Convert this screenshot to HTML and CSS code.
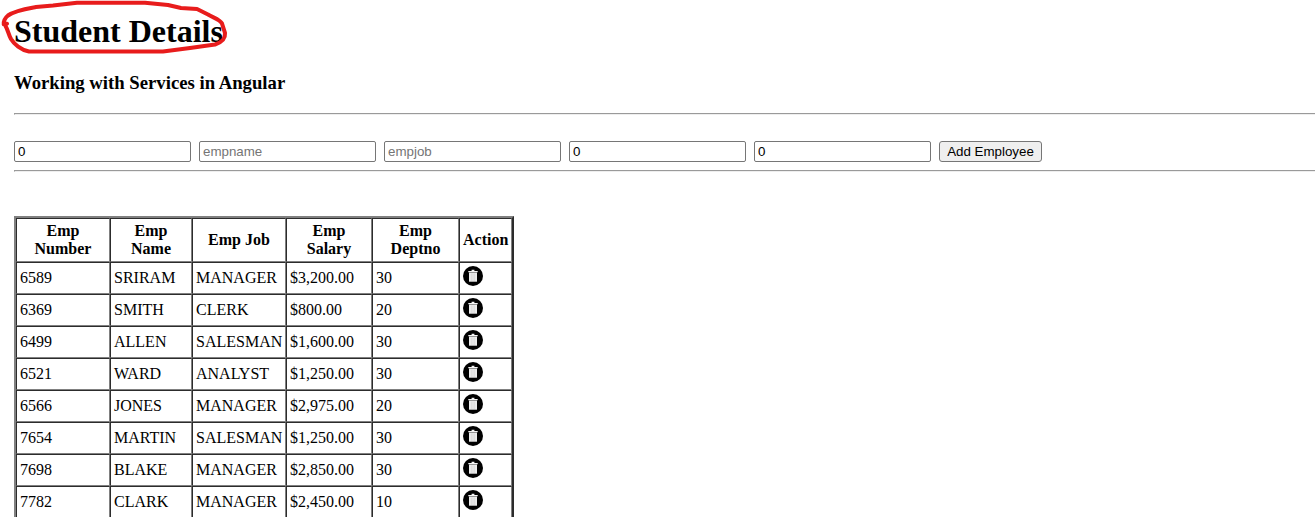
FILE: index.html
```
<!DOCTYPE html>
<html lang="en">
<head>
<meta charset="utf-8">
<title>Student Details</title>
<link rel="stylesheet" href="styles.css">
</head>
<body>
<svg class="sprite" aria-hidden="true">
  <symbol id="trash" viewBox="0 0 20 20">
    <circle cx="10" cy="10" r="10" fill="#000"/>
    <path d="M5.300 5H8.600V3.800H11.400V5H14.700V6.300H5.300Z" fill="#f4f4f4"/>
    <path d="M6 6.500H14V15.700H6Z" fill="#ededed"/>
    <path d="M8.300 7.500V15M10 7.500V15M11.700 7.500V15" stroke="#cfcfcf" stroke-width=".6"/>
  </symbol>
</svg>
<header class="heading">
  <h1 class="title">Student Details</h1>
  <svg class="scribble" width="230" height="58" viewBox="0 0 230 58" aria-hidden="true">
    <path d="M7 23.700L3.800 24.300C3.500 20 5 18 8 15.500C15 10.500 25 9 36 7L53 5.500L77 2.700H145L168 5L181 8L197 9L208 14.500C214 18 220 19.500 222 23.500L225 33C225.500 39 222.500 42 215 44.500L190 48L163 51.500H29C21 50 14 44 11 39C8.500 34.500 8 30 5.500 26"/>
  </svg>
</header>
<h3 class="subtitle">Working with Services in Angular</h3>
<hr class="rule">
<form class="entry">
  <input class="field" type="text" value="0">
  <input class="field" type="text" placeholder="empname">
  <input class="field" type="text" placeholder="empjob">
  <input class="field" type="text" value="0">
  <input class="field" type="text" value="0">
  <button class="add" type="button">Add Employee</button>
</form>
<hr class="rule">
<table class="employees">
  <colgroup><col class="c-number"><col class="c-name"><col class="c-job"><col class="c-salary"><col class="c-dept"><col class="c-action"></colgroup>
  <thead>
    <tr><th>Emp<br>Number</th><th>Emp<br>Name</th><th>Emp Job</th><th>Emp<br>Salary</th><th>Emp<br>Deptno</th><th>Action</th></tr>
  </thead>
  <tbody>
    <tr><td>6589</td><td>SRIRAM</td><td>MANAGER</td><td>$3,200.00</td><td>30</td><td><svg class="icon"><use href="#trash"/></svg></td></tr>
    <tr><td>6369</td><td>SMITH</td><td>CLERK</td><td>$800.00</td><td>20</td><td><svg class="icon"><use href="#trash"/></svg></td></tr>
    <tr><td>6499</td><td>ALLEN</td><td>SALESMAN</td><td>$1,600.00</td><td>30</td><td><svg class="icon"><use href="#trash"/></svg></td></tr>
    <tr><td>6521</td><td>WARD</td><td>ANALYST</td><td>$1,250.00</td><td>30</td><td><svg class="icon"><use href="#trash"/></svg></td></tr>
    <tr><td>6566</td><td>JONES</td><td>MANAGER</td><td>$2,975.00</td><td>20</td><td><svg class="icon"><use href="#trash"/></svg></td></tr>
    <tr><td>7654</td><td>MARTIN</td><td>SALESMAN</td><td>$1,250.00</td><td>30</td><td><svg class="icon"><use href="#trash"/></svg></td></tr>
    <tr><td>7698</td><td>BLAKE</td><td>MANAGER</td><td>$2,850.00</td><td>30</td><td><svg class="icon"><use href="#trash"/></svg></td></tr>
    <tr><td>7782</td><td>CLARK</td><td>MANAGER</td><td>$2,450.00</td><td>10</td><td><svg class="icon"><use href="#trash"/></svg></td></tr>
  </tbody>
</table>
</body>
</html>
```
FILE: styles.css
```
html {
  overflow: hidden;
}

body {
  margin: 0;
  padding: 13px 0 0 14px;
  background: #fff;
  color: #000;
  font: 16px/18px "Liberation Serif", "Times New Roman", serif;
}

.sprite {
  display: none;
}

.heading {
  position: relative;
}

.title {
  margin: 0;
  font-size: 32px;
  line-height: 37px;
}

/* Hand-drawn ring lying over the title */
.scribble {
  position: absolute;
  left: -14px;
  top: -13px;
  fill: none;
  stroke: #e81c1c;
  stroke-width: 4.1;
  stroke-linecap: round;
  stroke-linejoin: round;
}

.subtitle {
  margin: 22px 0 19px;
  font-size: 18.72px;
  line-height: 22px;
}

.rule {
  height: 2px;
  margin: 0;
  border: 0;
  border-top: 1px solid #9a9a9a;
  border-left: 1px solid #9a9a9a;
  border-bottom: 1px solid #eee;
  box-sizing: border-box;
}

.entry {
  display: flex;
  gap: 8px;
  margin: 26px 0 8px;
}

.field,
.add {
  box-sizing: border-box;
  height: 21px;
  margin: 0;
  font: 13.333px "Liberation Sans", Arial, sans-serif;
  color: #000;
  border: 1px solid #767676;
}

.field {
  width: 177px;
  padding: 1px 3px;
  border-radius: 2px;
  background: #fff;
}

.field::placeholder {
  color: #757575;
}

.add {
  width: 103px;
  padding: 0;
  border-radius: 3px;
  background: #efefef;
  white-space: nowrap;
}

.employees {
  width: 500px;
  margin-top: 44px;
  table-layout: fixed;
  border-collapse: separate;
  border-spacing: 0;
  border: 2px solid;
  border-color: #808080 #2c2c2c #2c2c2c #808080;
}

.c-number { width: 94px; }
.c-name { width: 82px; }
.c-job { width: 94px; }
.c-salary { width: 86px; }
.c-dept { width: 87px; }
.c-action { width: 53px; }

.employees th,
.employees td {
  padding: 3px;
  border: 1px solid;
  border-color: #2c2c2c #808080 #808080 #2c2c2c;
  vertical-align: middle;
  white-space: nowrap;
}

.employees td {
  height: 24px;
  box-sizing: content-box;
}

.icon {
  display: block;
  width: 20px;
  height: 20px;
  margin-bottom: 4px;
}
```
